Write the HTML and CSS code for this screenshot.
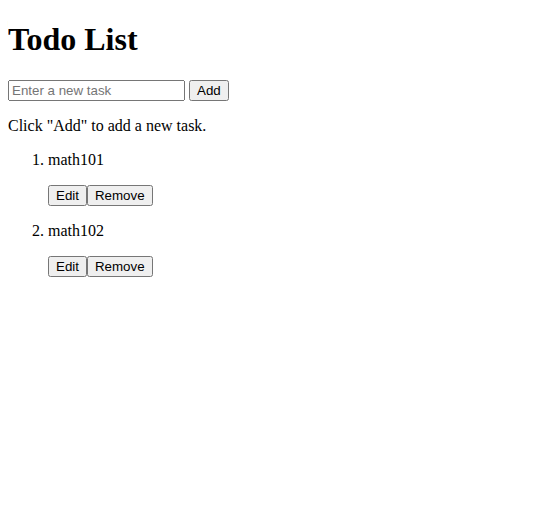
FILE: index.html
```html
<!DOCTYPE html>
<html>
<head>
<meta charset="utf-8">
<title>Todo List</title>
<link rel="stylesheet" href="styles.css">
</head>
<body>
<h1 class="title">Todo List</h1>
<div class="add-row"><input class="task-input" type="text" placeholder="Enter a new task"> <button class="btn">Add</button></div>
<p class="hint">Click "Add" to add a new task.</p>
<ol class="tasks">
<li class="task">math101<p class="actions"><button class="btn">Edit</button><button class="btn">Remove</button></p></li>
<li class="task">math102<p class="actions"><button class="btn">Edit</button><button class="btn">Remove</button></p></li>
</ol>
</body>
</html>
```
FILE: styles.css
```css
body {
  margin: 8px;
  font-family: "Liberation Serif", "Times New Roman", serif;
  font-size: 16px;
  color: #000;
  background: #fff;
}
.title {
  font-size: 32px;
  font-weight: bold;
  margin: 13.44px 0 21.44px;
}
.add-row {
  font-size: 16px;
}
.task-input, .btn {
  font-family: "Liberation Sans", Arial, sans-serif;
  font-size: 13.33px;
}
.task-input {
  width: 169px;
  box-sizing: content-box;
}
.hint {
  margin: 16px 0;
}
.tasks {
  margin: 16px 0;
  padding-left: 40px;
}
.actions {
  margin: 16px 0;
}
```
